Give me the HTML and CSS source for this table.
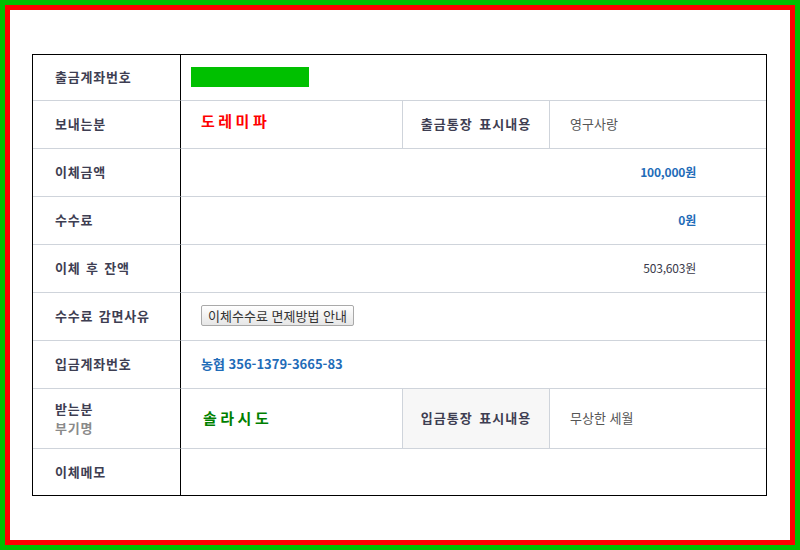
FILE: index.html
```html
<!DOCTYPE html>
<html lang="ko">
<head>
  <meta charset="UTF-8">
  <meta name="viewport" content="width=device-width, initial-scale=1.0">
  <title>이체 확인</title>
  <link rel="stylesheet" href="styles.css">
</head>
<body>
  <div class="frame">
    <div class="frame-inner">

      <!-- Transfer summary -->
      <div class="transfer">
        <div class="label">출금계좌번호</div>
        <div class="value span3"><span class="masked"></span></div>

        <div class="label">보내는분</div>
        <div class="value name-red">도레미파</div>
        <div class="head">출금통장 표시내용</div>
        <div class="value last">영구사랑</div>

        <div class="label">이체금액</div>
        <div class="value span3 amount strong">100,000원</div>

        <div class="label">수수료</div>
        <div class="value span3 amount strong">0원</div>

        <div class="label">이체 후 잔액</div>
        <div class="value span3 amount">503,603원</div>

        <div class="label">수수료 감면사유</div>
        <div class="value span3"><button class="btn">이체수수료 면제방법 안내</button></div>

        <div class="label">입금계좌번호</div>
        <div class="value span3 account">농협 356-1379-3665-83</div>

        <div class="label double">
          <div>받는분</div>
          <div class="sub">부기명</div>
        </div>
        <div class="value name-green">솔라시도</div>
        <div class="head shaded">입금통장 표시내용</div>
        <div class="value last">무상한 세월</div>

        <div class="label bottom">이체메모</div>
        <div class="value span3 bottom"></div>
      </div>

    </div>
  </div>
</body>
</html>
```

FILE: styles.css
```css
body {
  margin: 0;
  font-family: "Noto Sans CJK KR", "Noto Sans", sans-serif;
  font-size: 13px;
  color: #444;
}

.frame {
  height: 550px;
  box-sizing: border-box;
  border: 5px solid #00c000;
}

.frame-inner {
  height: 100%;
  box-sizing: border-box;
  border: 5px solid #ff0000;
  background-color: #fff;
  padding: 44px 0 0 22px;
}

.transfer {
  display: grid;
  grid-template-columns: 148px 221px 148px 216px;
  grid-template-rows: 46px repeat(6, 48px) 60px 46px;
  width: 733px;
  border: 1px solid #000;
}

.transfer > div {
  box-sizing: border-box;
  border-bottom: 1px solid #cfd4db;
  display: flex;
  align-items: center;
  padding-bottom: 2px;
}

.transfer > .bottom {
  border-bottom: none;
}

.label {
  border-right: 1px solid #000;
  padding-left: 22px;
  font-weight: bold;
  color: #3e3e52;
  letter-spacing: 0.8px;
  word-spacing: 1px;
}

.label.double {
  flex-direction: column;
  justify-content: center;
  align-items: flex-start;
  line-height: 19px;
}

.label .sub {
  color: #8a8a8a;
}

.value {
  padding-left: 20px;
}

.span3 {
  grid-column: span 3;
}

.head {
  justify-content: center;
  font-weight: bold;
  color: #3e3e52;
  letter-spacing: 1px;
  word-spacing: 2px;
  border-left: 1px solid #cfd4db;
  border-right: 1px solid #cfd4db;
}

.head.shaded {
  background-color: #f7f7f7;
}

.value.last {
  color: #555;
}

.masked {
  display: block;
  width: 118px;
  height: 20px;
  margin-left: -10px;
  background-color: #00c000;
}

.name-red {
  color: #ff0000;
  font-size: 15px;
  font-weight: bold;
  letter-spacing: 3.5px;
  padding-bottom: 8px !important;
}

.name-green {
  color: #008000;
  font-size: 15px;
  font-weight: bold;
  letter-spacing: 3.5px;
  padding-left: 22px;
}

.amount {
  justify-content: flex-end;
  padding-right: 70px;
  color: #3a3a4a;
  font-size: 12px;
  letter-spacing: -0.2px;
}

.amount.strong,
.account {
  color: #1f6cb8;
  font-weight: bold;
}

.btn {
  height: 21px;
  width: 153px;
  padding: 0;
  font-family: "Noto Sans CJK KR", sans-serif;
  font-size: 13px;
  color: #333;
  background: linear-gradient(#ffffff, #e6e6e6);
  border: 1px solid #a9a9a9;
  border-radius: 2px;
}
```
